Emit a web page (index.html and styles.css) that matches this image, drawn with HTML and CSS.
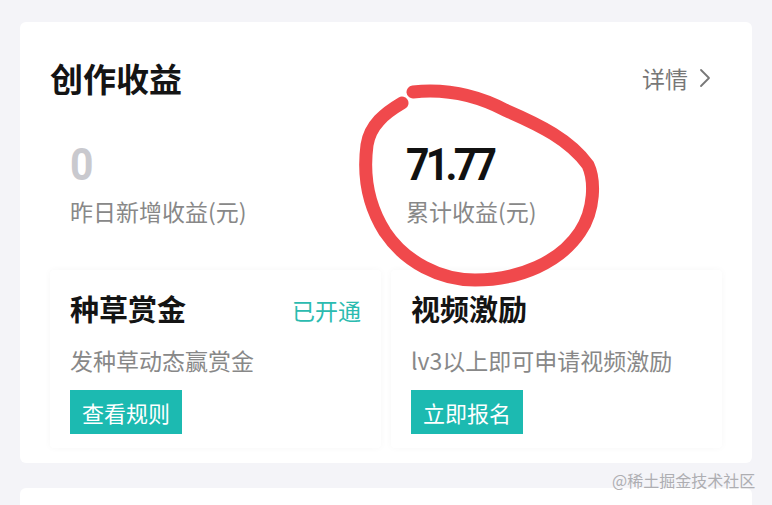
FILE: index.html
```html
<!DOCTYPE html>
<html lang="zh-CN">
<head>
<meta charset="utf-8">
<title>创作收益</title>
<link rel="stylesheet" href="styles.css">
</head>
<body>
<div class="page">
  <section class="card">
    <div class="head">
      <h1 class="title">创作收益</h1>
      <a class="more">详情<svg class="chev" width="14" height="20" viewBox="0 0 14 20"><path d="M3 2 L11 10 L3 18" fill="none" stroke="#777" stroke-width="1.8" stroke-linecap="round" stroke-linejoin="round"/></svg></a>
    </div>
    <div class="stats">
      <div class="stat">
        <div class="value muted">0</div>
        <div class="label">昨日新增收益(元)</div>
      </div>
      <div class="stat stat-right">
        <div class="value">71.77</div>
        <div class="label">累计收益(元)</div>
      </div>
    </div>
    <div class="subs">
      <div class="sub">
        <div class="sub-head">
          <span class="sub-title">种草赏金</span>
          <span class="status">已开通</span>
        </div>
        <div class="desc">发种草动态赢赏金</div>
        <button class="btn">查看规则</button>
      </div>
      <div class="sub">
        <div class="sub-head">
          <span class="sub-title">视频激励</span>
        </div>
        <div class="desc">lv3以上即可申请视频激励</div>
        <button class="btn">立即报名</button>
      </div>
    </div>
  </section>
  <section class="card next"></section>
</div>
<svg class="scribble" width="772" height="505" viewBox="0 0 772 505">
  <path d="M402,103 C385,113 370,125 367,145 C363,175 368,205 385,232 C405,262 440,280 475,280 C520,280 560,262 580,232 C595,210 595,180 588,165 C570,140 540,125 505,110 C480,97 450,88 413,92" fill="none" stroke="#f0494c" stroke-width="13" stroke-linecap="round" stroke-linejoin="round"/>
</svg>
<div class="watermark">@稀土掘金技术社区</div>
</body>
</html>
```

FILE: styles.css
```css
html, body {
  margin: 0;
  padding: 0;
}
body {
  background: #f4f4f8;
  font-family: "Noto Sans CJK SC", "Noto Sans", sans-serif;
  width: 772px;
  height: 505px;
  overflow: hidden;
  position: relative;
}
.page {
  padding: 22px 20px 0;
}
.card {
  background: #fff;
  border-radius: 6px;
  height: 441px;
  box-sizing: border-box;
  padding-top: 36px;
}
.card.next {
  margin-top: 25px;
  height: 17px;
  padding: 0;
  border-radius: 6px 6px 0 0;
}
.head {
  display: flex;
  justify-content: space-between;
  align-items: center;
  padding: 0 40px 0 30px;
  height: 40px;
}
.title {
  margin: 0;
  font-size: 33px;
  line-height: 40px;
  font-weight: 700;
  color: #141414;
}
.more {
  display: flex;
  align-items: center;
  font-size: 23px;
  color: #777;
  line-height: 30px;
}
.chev {
  margin-left: 10px;
}
.stats {
  display: grid;
  grid-template-columns: 1fr 1fr;
  gap: 10px;
  padding: 0 30px;
  margin-top: 42px;
}
.stat {
  padding-left: 20px;
}
.stat-right {
  padding-left: 15px;
}
.value {
  font-family: Roboto, "Liberation Sans", sans-serif;
  font-weight: 700;
  font-size: 44px;
  line-height: 50px;
  letter-spacing: -4px;
  color: #111;
  transform: scaleX(0.93);
  transform-origin: left center;
}
.value.muted {
  color: #c9c9ce;
}
.label {
  margin-top: 6px;
  font-size: 23px;
  line-height: 30px;
  color: #888;
}
.subs {
  display: grid;
  grid-template-columns: 1fr 1fr;
  gap: 10px;
  padding: 0 30px;
  margin-top: 44px;
}
.sub {
  height: 178px;
  box-sizing: border-box;
  padding: 18px 20px 14px;
  border-radius: 4px;
  box-shadow: 0 0 7px rgba(0, 0, 0, 0.035);
  display: flex;
  flex-direction: column;
  align-items: flex-start;
}
.sub-head {
  display: flex;
  justify-content: space-between;
  align-items: center;
  align-self: stretch;
  height: 40px;
}
.sub-title {
  font-size: 29px;
  font-weight: 700;
  color: #141414;
  line-height: 40px;
}
.status {
  font-size: 23px;
  color: #2bbbb0;
  line-height: 30px;
  margin-top: 4px;
}
.desc {
  margin-top: 17px;
  font-size: 23px;
  line-height: 30px;
  color: #888;
}
.btn {
  margin-top: 15px;
  height: 44px;
  padding: 0 12px;
  border: 0;
  border-radius: 0;
  background: #1cbab1;
  color: #fff;
  font-family: "Noto Sans CJK SC", sans-serif;
  font-size: 22px;
  line-height: 44px;
}
.scribble {
  position: absolute;
  left: 0;
  top: 0;
  pointer-events: none;
}
.watermark {
  position: absolute;
  left: 612px;
  top: 468px;
  font-size: 16px;
  line-height: 24px;
  color: #aeaeb2;
}
```
